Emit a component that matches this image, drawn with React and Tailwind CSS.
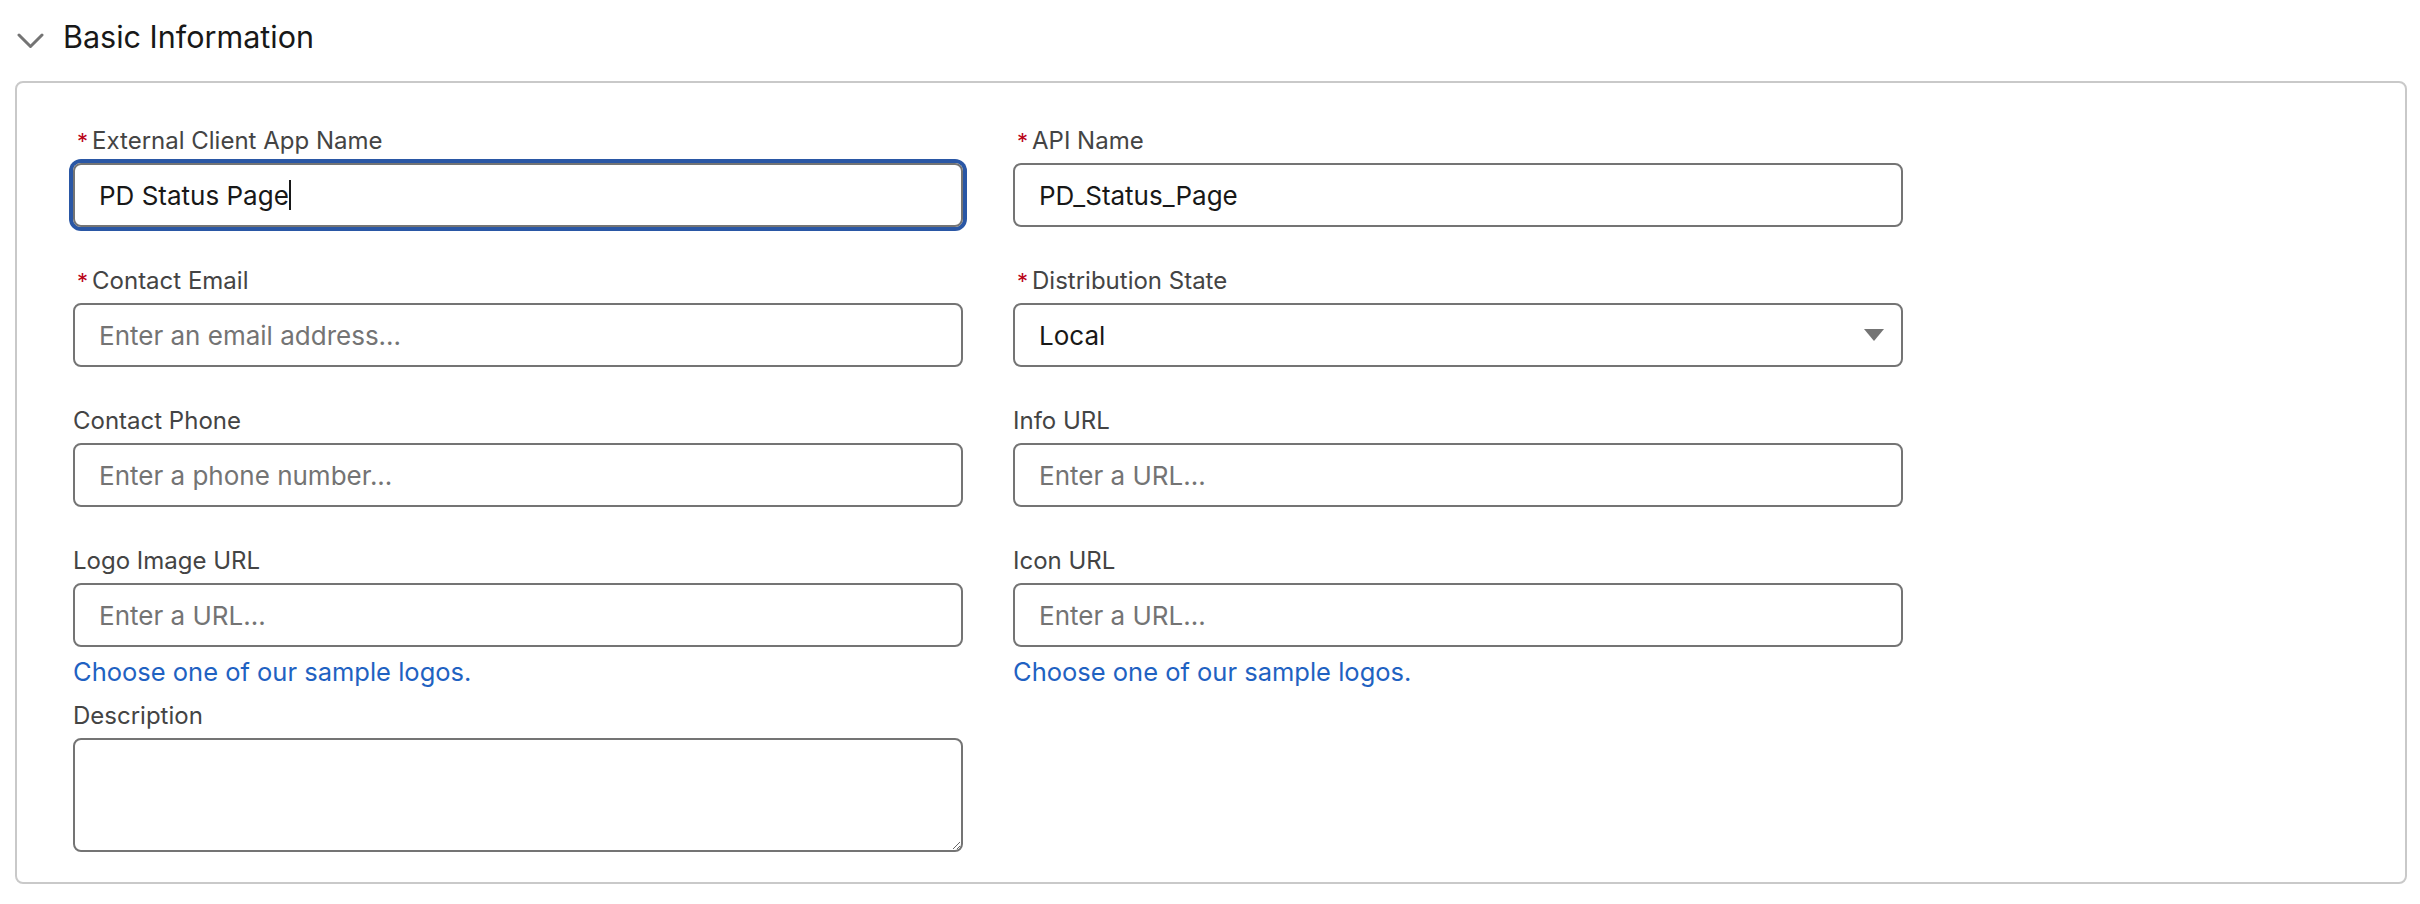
import React from "react";

function Label({ children, required }) {
  return (
    <div className="flex items-baseline h-[36px] pt-[4px] leading-[32px] mb-[6px] text-[24px] text-[#444444]">
      {required && <span className="text-[#ba0517] text-[22px] mr-[4px] ml-[4px]">*</span>}
      <span>{children}</span>
    </div>
  );
}

function TextInput({ placeholder, value }) {
  return (
    <input
      readOnly
      defaultValue={value}
      placeholder={placeholder}
      className="w-full h-[64px] border-2 border-[#747474] rounded-[8px] px-[24px] text-[26px] text-[#181818] placeholder:text-[#747474] bg-white outline-none"
    />
  );
}

function Field({ label, required, placeholder, value, link }) {
  return (
    <div className="flex flex-col">
      <Label required={required}>{label}</Label>
      <TextInput placeholder={placeholder} value={value} />
      {link && (
        <div className="mt-[7px] h-[36px] leading-[36px] text-[25.5px] text-[#1f62c2]">
          Choose one of our sample logos.
        </div>
      )}
    </div>
  );
}

export default function App() {
  return (
    <div
      className="w-[2420px] h-[904px] bg-white text-[#181818]"
      style={{ fontFamily: "Inter, 'Noto Sans', sans-serif" }}
    >
      <div className="flex items-center h-[81px] pl-[17px] pb-[7px]">
        <svg width="27" height="17" viewBox="0 0 27 17" className="mt-[8px]">
          <polyline points="2,2 13.5,13.5 25,2" fill="none" stroke="#747474" strokeWidth="3" strokeLinecap="round" strokeLinejoin="round" />
        </svg>
        <span className="ml-[19px] text-[30.5px] leading-[40px] text-[#181818]">Basic Information</span>
      </div>
      <div className="ml-[15px] mr-[13px] h-[803px] border-2 border-[#c9c9c9] rounded-[8px] pt-[38px] pl-[56px]">
        <div className="grid grid-cols-[890px_890px] gap-x-[50px] gap-y-[34px]">
          <div className="flex flex-col">
            <Label required>External Client App Name</Label>
            <div className="h-[64px] border-2 border-[#747474] rounded-[8px] shadow-[0_0_0_4px_#2a57a5] px-[24px] flex items-center text-[26px] text-[#181818]">
              <span>PD Status Page</span>
              <span className="inline-block w-[2px] h-[30px] bg-[#181818]"></span>
            </div>
          </div>
          <Field label="API Name" required value="PD_Status_Page" />
          <Field label="Contact Email" required placeholder="Enter an email address..." />
          <div className="flex flex-col">
            <Label required>Distribution State</Label>
            <div className="h-[64px] border-2 border-[#747474] rounded-[8px] pl-[24px] pr-[17px] flex items-center justify-between text-[26px] text-[#181818] bg-white">
              <span>Local</span>
              <svg width="20" height="12" viewBox="0 0 20 12">
                <polygon points="0,0 20,0 10,12" fill="#747474" />
              </svg>
            </div>
          </div>
          <Field label="Contact Phone" placeholder="Enter a phone number..." />
          <Field label="Info URL" placeholder="Enter a URL..." />
          <Field label="Logo Image URL" placeholder="Enter a URL..." link />
          <Field label="Icon URL" placeholder="Enter a URL..." link />
        </div>
        <div className="mt-[6px] w-[890px] flex flex-col">
          <Label>Description</Label>
          <textarea
            readOnly
            className="w-full h-[114px] border-2 border-[#747474] rounded-[8px] px-[24px] py-[12px] text-[26px] bg-white outline-none resize"
          ></textarea>
        </div>
      </div>
    </div>
  );
}
